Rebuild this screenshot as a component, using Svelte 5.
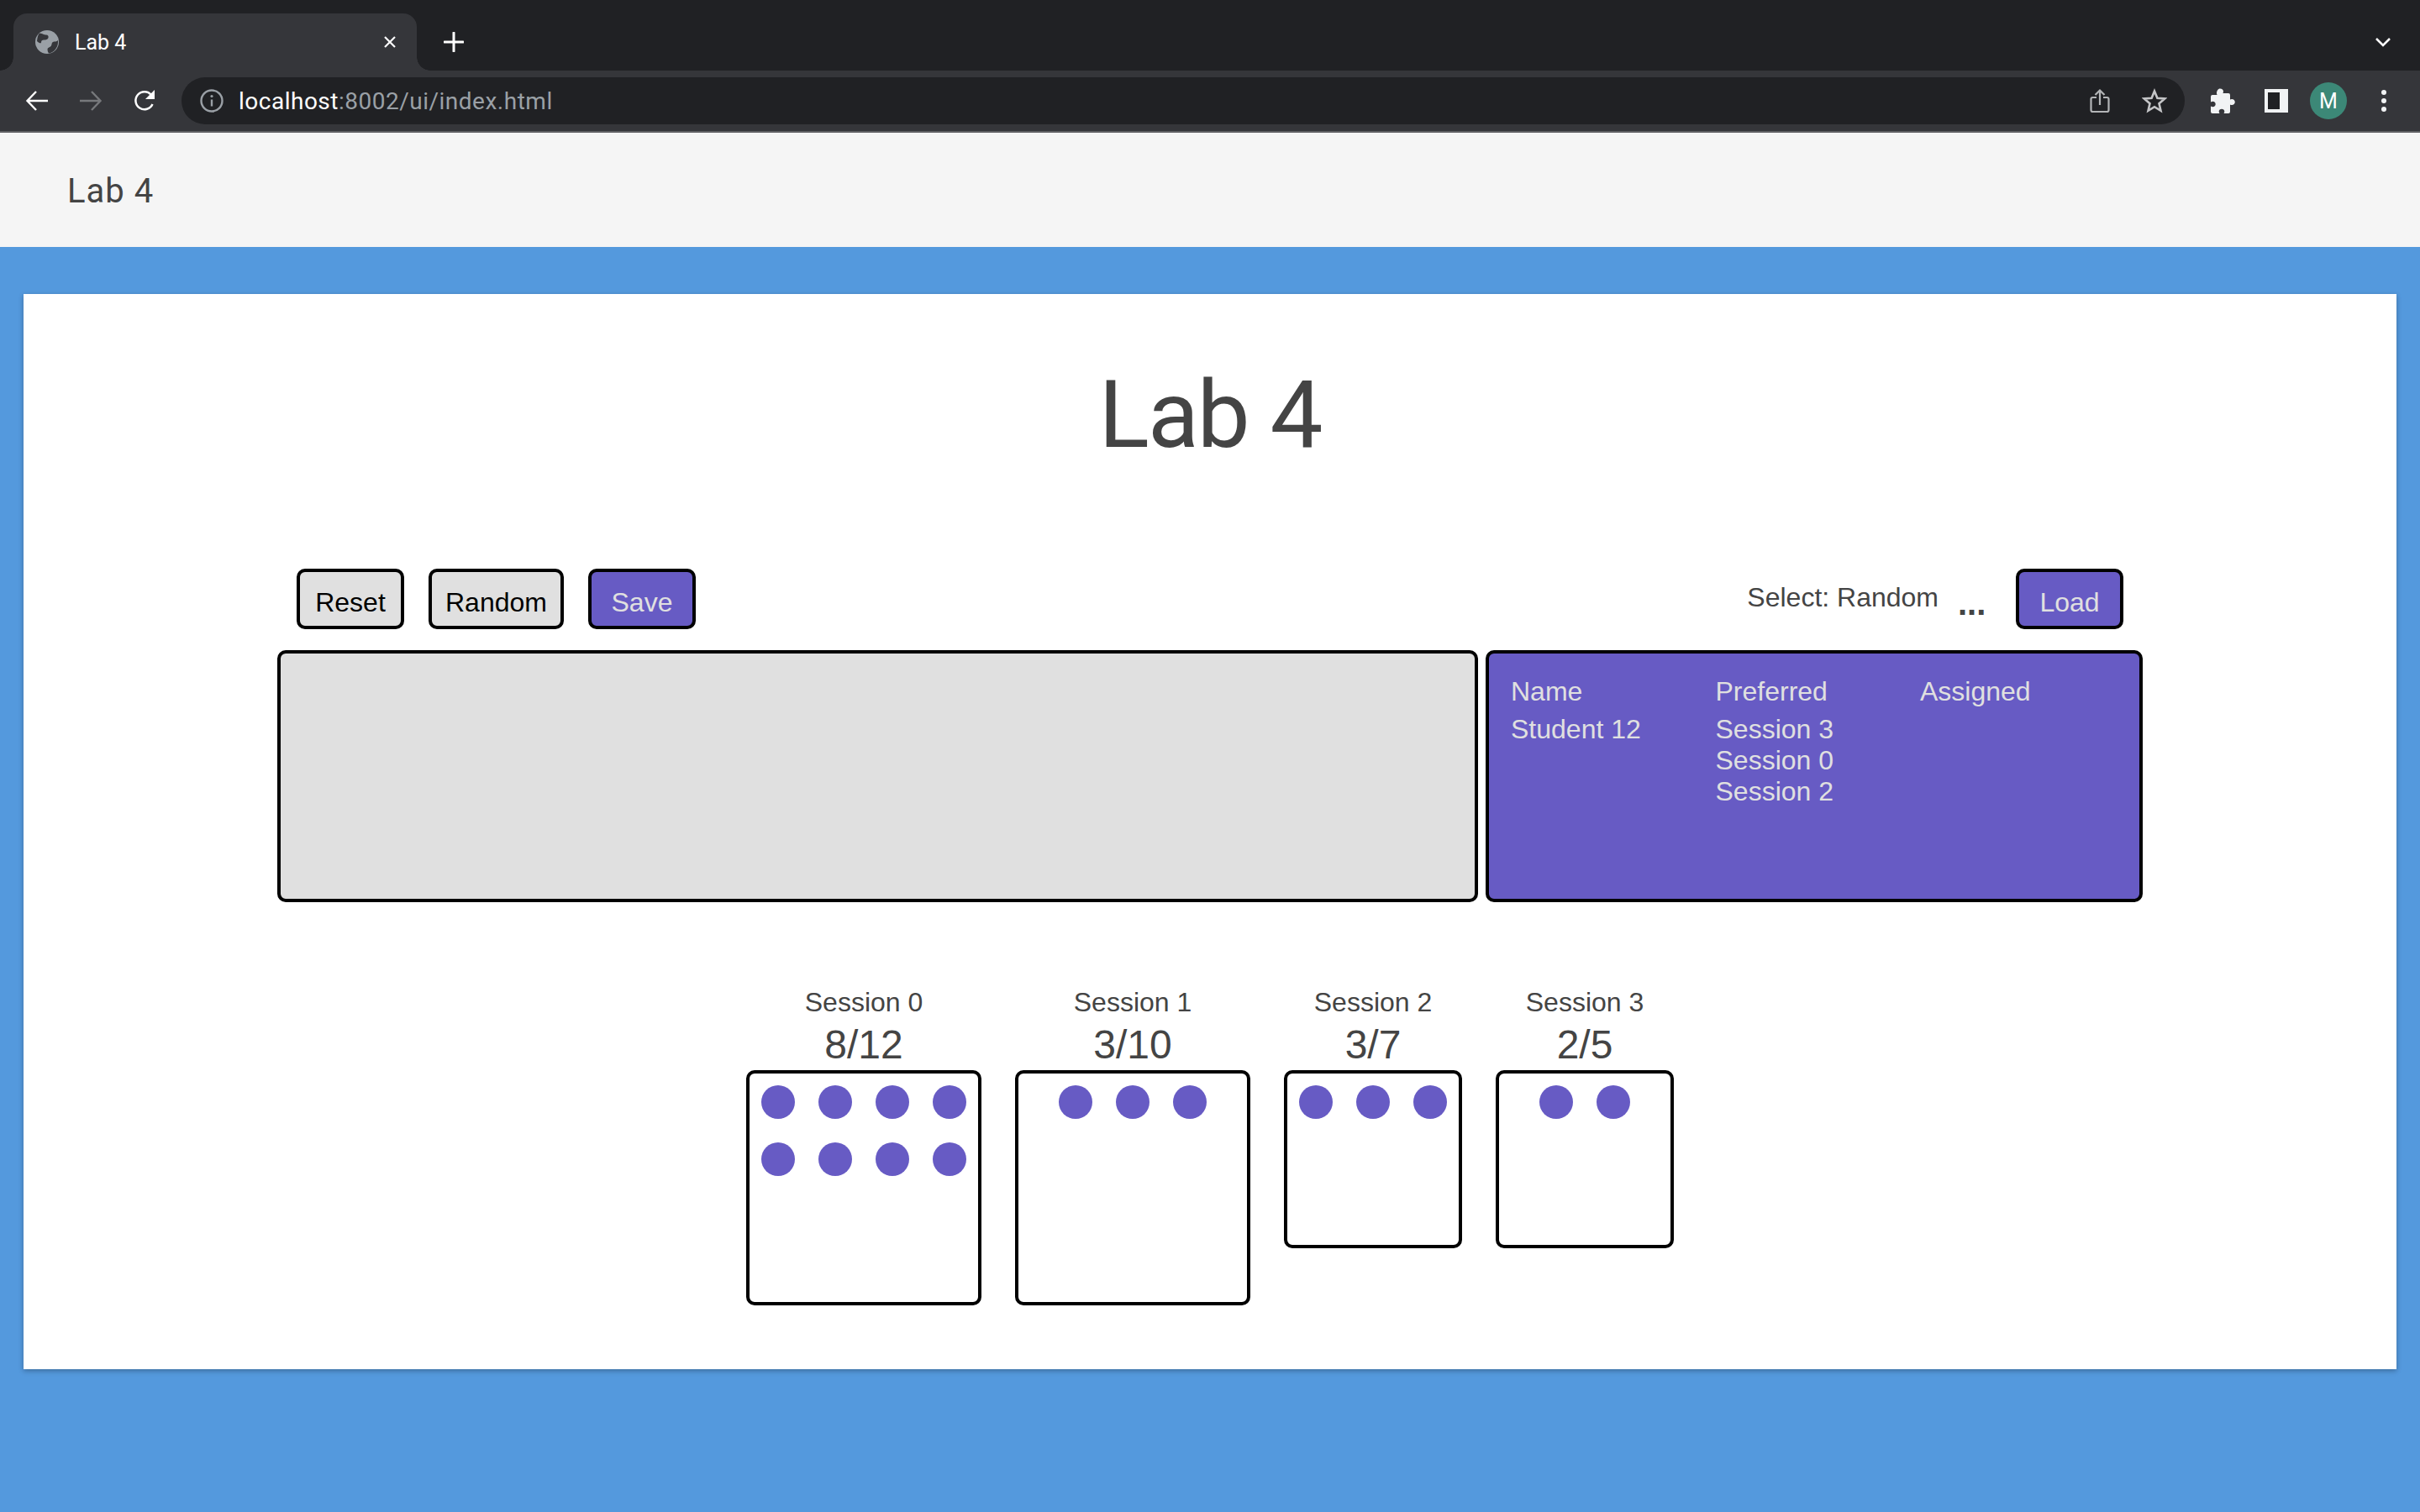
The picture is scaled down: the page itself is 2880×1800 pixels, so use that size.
<script>
  const sessions = [
    { name: "Session 0", filled: 8, total: 12, size: "big" },
    { name: "Session 1", filled: 3, total: 10, size: "big" },
    { name: "Session 2", filled: 3, total: 7, size: "small" },
    { name: "Session 3", filled: 2, total: 5, size: "small" }
  ];

  const preferred = ["Session 3", "Session 0", "Session 2"];
</script>

<div class="browser">
  <div class="tabstrip">
    <div class="tab">
      <svg class="globe" viewBox="0 0 28 28" width="28" height="28">
        <circle cx="14" cy="14" r="14" fill="#9aa0a6" />
        <path d="M5 3.500c4 .5 5 2 8 2 2 0 3 1.500 2.500 3.500-.5 2-3 2.500-5 2.500-2.500 0-3.500 1-3.500 3 0 1.500-2.500 1-5-1.500C2.500 9 3 5.500 5 3.500z" fill="#35363a" />
        <path d="M27 12c-1.500 2-4 1-6 2-2 1.200-1 3.500-2.500 5-1.500 1.500-4 1.500-4 4 0 1.500.5 3 1.500 4.500 6-1 11-6.500 11-13.500 0-.7 0-1.300 0-2z" fill="#35363a" />
      </svg>
      <span class="tab-title">Lab 4</span>
      <svg class="close" viewBox="0 0 16 16" width="16" height="16">
        <path d="M2 2l12 12M14 2L2 14" stroke="#fff" stroke-width="2.200" fill="none" />
      </svg>
    </div>
    <svg class="plus" viewBox="0 0 24 24" width="24" height="24">
      <path d="M12 1v22M1 12h22" stroke="#fff" stroke-width="3" stroke-linecap="round" fill="none" />
    </svg>
    <svg class="chevron" viewBox="0 0 18 12" width="18" height="12">
      <path d="M1 2l8 8 8-8" stroke="#fff" stroke-width="2.500" fill="none" />
    </svg>
  </div>

  <div class="toolbar">
    <button class="nav" aria-label="Back">
      <svg viewBox="0 0 28 28" width="28" height="28">
        <path d="M27 14H3M13 3L2.500 14 13 25" stroke="#fff" stroke-width="2.400" fill="none" />
      </svg>
    </button>
    <button class="nav" aria-label="Forward">
      <svg viewBox="0 0 28 28" width="28" height="28">
        <path d="M1 14h24M15 3l10.500 11L15 25" stroke="#77797c" stroke-width="2.400" fill="none" />
      </svg>
    </button>
    <button class="nav" aria-label="Reload">
      <svg viewBox="0 0 28 28" width="28" height="28">
        <path d="M23.500 18a10.500 10.500 0 1 1-1.500-11" stroke="#fff" stroke-width="2.500" fill="none" />
        <path d="M26 1v11H15z" fill="#fff" />
      </svg>
    </button>

    <div class="omnibox">
      <svg class="info" viewBox="0 0 28 28" width="28" height="28">
        <circle cx="14" cy="14" r="12.500" stroke="#9aa0a6" stroke-width="2.400" fill="none" />
        <path d="M14 12.500v8" stroke="#9aa0a6" stroke-width="2.400" />
        <circle cx="14" cy="8.500" r="1.600" fill="#9aa0a6" />
      </svg>
      <span class="url">localhost<span class="url-dim">:8002/ui/index.html</span></span>
      <svg class="omni-icon" viewBox="0 0 24 30" width="24" height="30">
        <path d="M8 11H3.500a2 2 0 0 0-2 2v13a2 2 0 0 0 2 2h17a2 2 0 0 0 2-2V13a2 2 0 0 0-2-2H16" stroke="#b3b5b7" stroke-width="2.200" fill="none" />
        <path d="M12 20V3M6.500 8L12 2.500 17.500 8" stroke="#b3b5b7" stroke-width="2.200" fill="none" />
      </svg>
      <svg class="omni-icon star" viewBox="0 0 30 30" width="30" height="30">
        <path d="M15 3.500l3.400 8.200 8.800.7-6.700 5.800 2 8.600L15 22.200 7.500 26.800l2-8.600-6.700-5.800 8.800-.7z" stroke="#c4c5c7" stroke-width="2.600" fill="none" />
      </svg>
    </div>

    <div class="actions">
      <svg viewBox="0 0 30 30" width="30" height="30">
        <path d="M12 0.500c2.500 0 4 1.500 4 3.500 0 .8-.3 1.500-.6 2H22a2 2 0 0 1 2 2v5.500c.6-.4 1.200-.6 2-.6 2.300 0 3.800 1.700 3.800 3.600s-1.500 3.600-3.800 3.600c-.8 0-1.400-.2-2-.6V28a2 2 0 0 1-2 2h-5.500c.6-1 .8-1.600.8-2.400 0-1.700-1.500-2.900-3.300-2.900s-3.300 1.200-3.300 2.900c0 .8.200 1.400.8 2.400H3a2 2 0 0 1-2-2v-6.500c1 .6 1.600.8 2.400.8 2 0 3.300-1.500 3.300-3.300s-1.300-3.300-3.300-3.300c-.8 0-1.400.2-2.400.8V10a2 2 0 0 1 2-2h5.600c-.4-.7-.6-1.300-.6-2 0-3 1.700-5.500 4-5.500z" fill="#f1f3f4" />
      </svg>
      <div class="side-panel"></div>
      <div class="avatar">M</div>
      <div class="kebab"><i></i><i></i><i></i></div>
    </div>
  </div>
</div>

<header class="app-bar">Lab 4</header>

<main class="page">
  <section class="card">
    <h1>Lab 4</h1>

    <div class="board">
      <div class="controls">
        <div class="group">
          <button class="btn">Reset</button>
          <button class="btn">Random</button>
          <button class="btn primary">Save</button>
        </div>
        <div class="group load">
          <span class="select-label">Select: Random</span>
          <span class="ellipsis">...</span>
          <button class="btn primary">Load</button>
        </div>
      </div>

      <div class="panels">
        <div class="pool"></div>
        <div class="details">
          <div class="col">
            <div class="col-head">Name</div>
            <div>Student 12</div>
          </div>
          <div class="col">
            <div class="col-head">Preferred</div>
            {#each preferred as p}
              <div>{p}</div>
            {/each}
          </div>
          <div class="col">
            <div class="col-head">Assigned</div>
          </div>
        </div>
      </div>
    </div>

    <div class="sessions">
      {#each sessions as s}
        <div class="session">
          <div class="session-name">{s.name}</div>
          <div class="session-count">{s.filled}/{s.total}</div>
          <div class="seats {s.size}">
            {#each Array(s.filled) as _}
              <span class="dot"></span>
            {/each}
          </div>
        </div>
      {/each}
    </div>
  </section>
</main>

<style>
  :global(body) {
    margin: 0;
    background: #5499dd;
    font-family: "Liberation Sans", Arial, sans-serif;
  }

  .browser {
    height: 158px;
    background: #35363a;
    border-bottom: 2px solid #5f6063;
    box-sizing: border-box;
  }

  .tabstrip {
    height: 84px;
    background: #202124;
    display: flex;
    align-items: flex-end;
    padding-left: 16px;
  }

  .tab {
    position: relative;
    width: 480px;
    height: 68px;
    box-sizing: border-box;
    background: #35363a;
    border-radius: 16px 16px 0 0;
    display: flex;
    align-items: center;
    padding: 0 24px 0 26px;
    color: #fff;
    font-family: Roboto, sans-serif;
    font-size: 25px;
  }

  /* flared bottom corners of the active tab */
  .tab::before,
  .tab::after {
    content: "";
    position: absolute;
    bottom: 0;
    width: 16px;
    height: 16px;
  }

  .tab::before {
    left: -16px;
    background: radial-gradient(circle at 0 0, transparent 15.500px, #35363a 16px);
  }

  .tab::after {
    right: -16px;
    background: radial-gradient(circle at 100% 0, transparent 15.500px, #35363a 16px);
  }

  .tab-title {
    margin-left: 19px;
    flex: 1;
  }

  .plus {
    margin: 0 0 22px 32px;
  }

  .chevron {
    margin: 0 35px 28px auto;
  }

  .toolbar {
    height: 72px;
    display: flex;
    align-items: center;
    padding-left: 12px;
  }

  .nav {
    width: 64px;
    height: 56px;
    padding: 0;
    border: 0;
    background: none;
    display: flex;
    align-items: center;
    justify-content: center;
  }

  .omnibox {
    margin-left: 12px;
    width: 2384px;
    height: 56px;
    border-radius: 28px;
    background: #202124;
    display: flex;
    align-items: center;
    padding: 0 21px 0 22px;
    box-sizing: border-box;
  }

  .url {
    margin-left: 18px;
    flex: 1;
    color: #fff;
    font-family: Roboto, sans-serif;
    font-size: 28px;
    letter-spacing: 0.5px;
  }

  .url-dim {
    color: #9aa0a6;
  }

  .star {
    margin-left: 38px;
  }

  .actions {
    display: flex;
    align-items: center;
    margin-left: 30px;
  }

  .side-panel {
    width: 28px;
    height: 28px;
    margin-left: 35px;
    box-sizing: border-box;
    background: #202124;
    border: 4px solid #f1f3f4;
    border-right-width: 10px;
  }

  .avatar {
    width: 44px;
    height: 44px;
    margin-left: 26px;
    border-radius: 50%;
    background: #3c8877;
    color: #fff;
    font-family: Roboto, sans-serif;
    font-size: 25px;
    display: flex;
    align-items: center;
    justify-content: center;
  }

  .kebab {
    margin-left: 41px;
    display: flex;
    flex-direction: column;
    gap: 4px;
  }

  .kebab i {
    width: 6px;
    height: 6px;
    border-radius: 50%;
    background: #f1f3f4;
  }

  .app-bar {
    height: 136px;
    box-sizing: border-box;
    background: #f5f5f5;
    display: flex;
    align-items: center;
    padding: 3px 0 0 80px;
    color: #444;
    font-family: Roboto, sans-serif;
    font-size: 40px;
    letter-spacing: 1px;
  }

  .page {
    padding: 56px 28px 170px;
  }

  .card {
    height: 1280px;
    box-sizing: border-box;
    background: #fff;
    box-shadow: 0 2px 6px rgba(0, 0, 0, 0.3);
    padding-top: 78px;
  }

  h1 {
    margin: 0;
    text-align: center;
    color: #444;
    font-family: Roboto, sans-serif;
    font-weight: 400;
    font-size: 112px;
    line-height: 132px;
    letter-spacing: -2px;
  }

  .board {
    width: 2220px;
    margin: 117px auto 0;
  }

  .controls {
    display: flex;
    justify-content: space-between;
    padding: 0 23px;
  }

  .group {
    display: flex;
    gap: 29px;
  }

  .load {
    gap: 0;
  }

  .btn {
    min-width: 128px;
    height: 72px;
    padding: 8px 16px 0;
    box-sizing: border-box;
    border: 4px solid #000;
    border-radius: 10px;
    background: #e0e0e0;
    color: #000;
    font-family: inherit;
    font-size: 32px;
  }

  .primary {
    background: #675bc4;
    color: #e0e0e0;
  }

  .select-label {
    color: #444;
    font-size: 32px;
    margin-top: 16px;
    margin-right: -2px;
  }

  .ellipsis {
    width: 94px;
    padding-left: 25px;
    box-sizing: border-box;
    color: #444;
    font-size: 40px;
    font-weight: 700;
    line-height: 46px;
    margin-top: 18px;
  }

  .panels {
    display: flex;
    justify-content: space-between;
    margin-top: 25px;
  }

  .pool,
  .details {
    height: 300px;
    box-sizing: border-box;
    border: 4px solid #000;
    border-radius: 10px;
  }

  .pool {
    width: 1429px;
    background: #e0e0e0;
  }

  .details {
    width: 782px;
    background: #675bc4;
    color: #e0e0e0;
    font-size: 32px;
    padding: 27px 26px 0;
    display: grid;
    grid-template-columns: repeat(3, 243.500px);
  }

  .col-head {
    margin-bottom: 8px;
  }

  .sessions {
    display: flex;
    justify-content: center;
    align-items: flex-start;
    gap: 40px;
    margin-top: 101px;
  }

  .session {
    color: #444;
    text-align: center;
  }

  .session-name {
    font-size: 32px;
    line-height: 37px;
  }

  .session-count {
    font-size: 48px;
    line-height: 55px;
    margin-top: 4px;
    margin-bottom: 3px;
  }

  .seats {
    box-sizing: border-box;
    border: 4px solid #000;
    border-radius: 10px;
    display: flex;
    flex-wrap: wrap;
    justify-content: center;
    align-content: flex-start;
  }

  .seats.big {
    width: 280px;
    height: 280px;
  }

  .seats.small {
    width: 212px;
    height: 212px;
  }

  .dot {
    width: 40px;
    height: 40px;
    margin: 14px;
    border-radius: 50%;
    background: #675bc4;
  }
</style>
